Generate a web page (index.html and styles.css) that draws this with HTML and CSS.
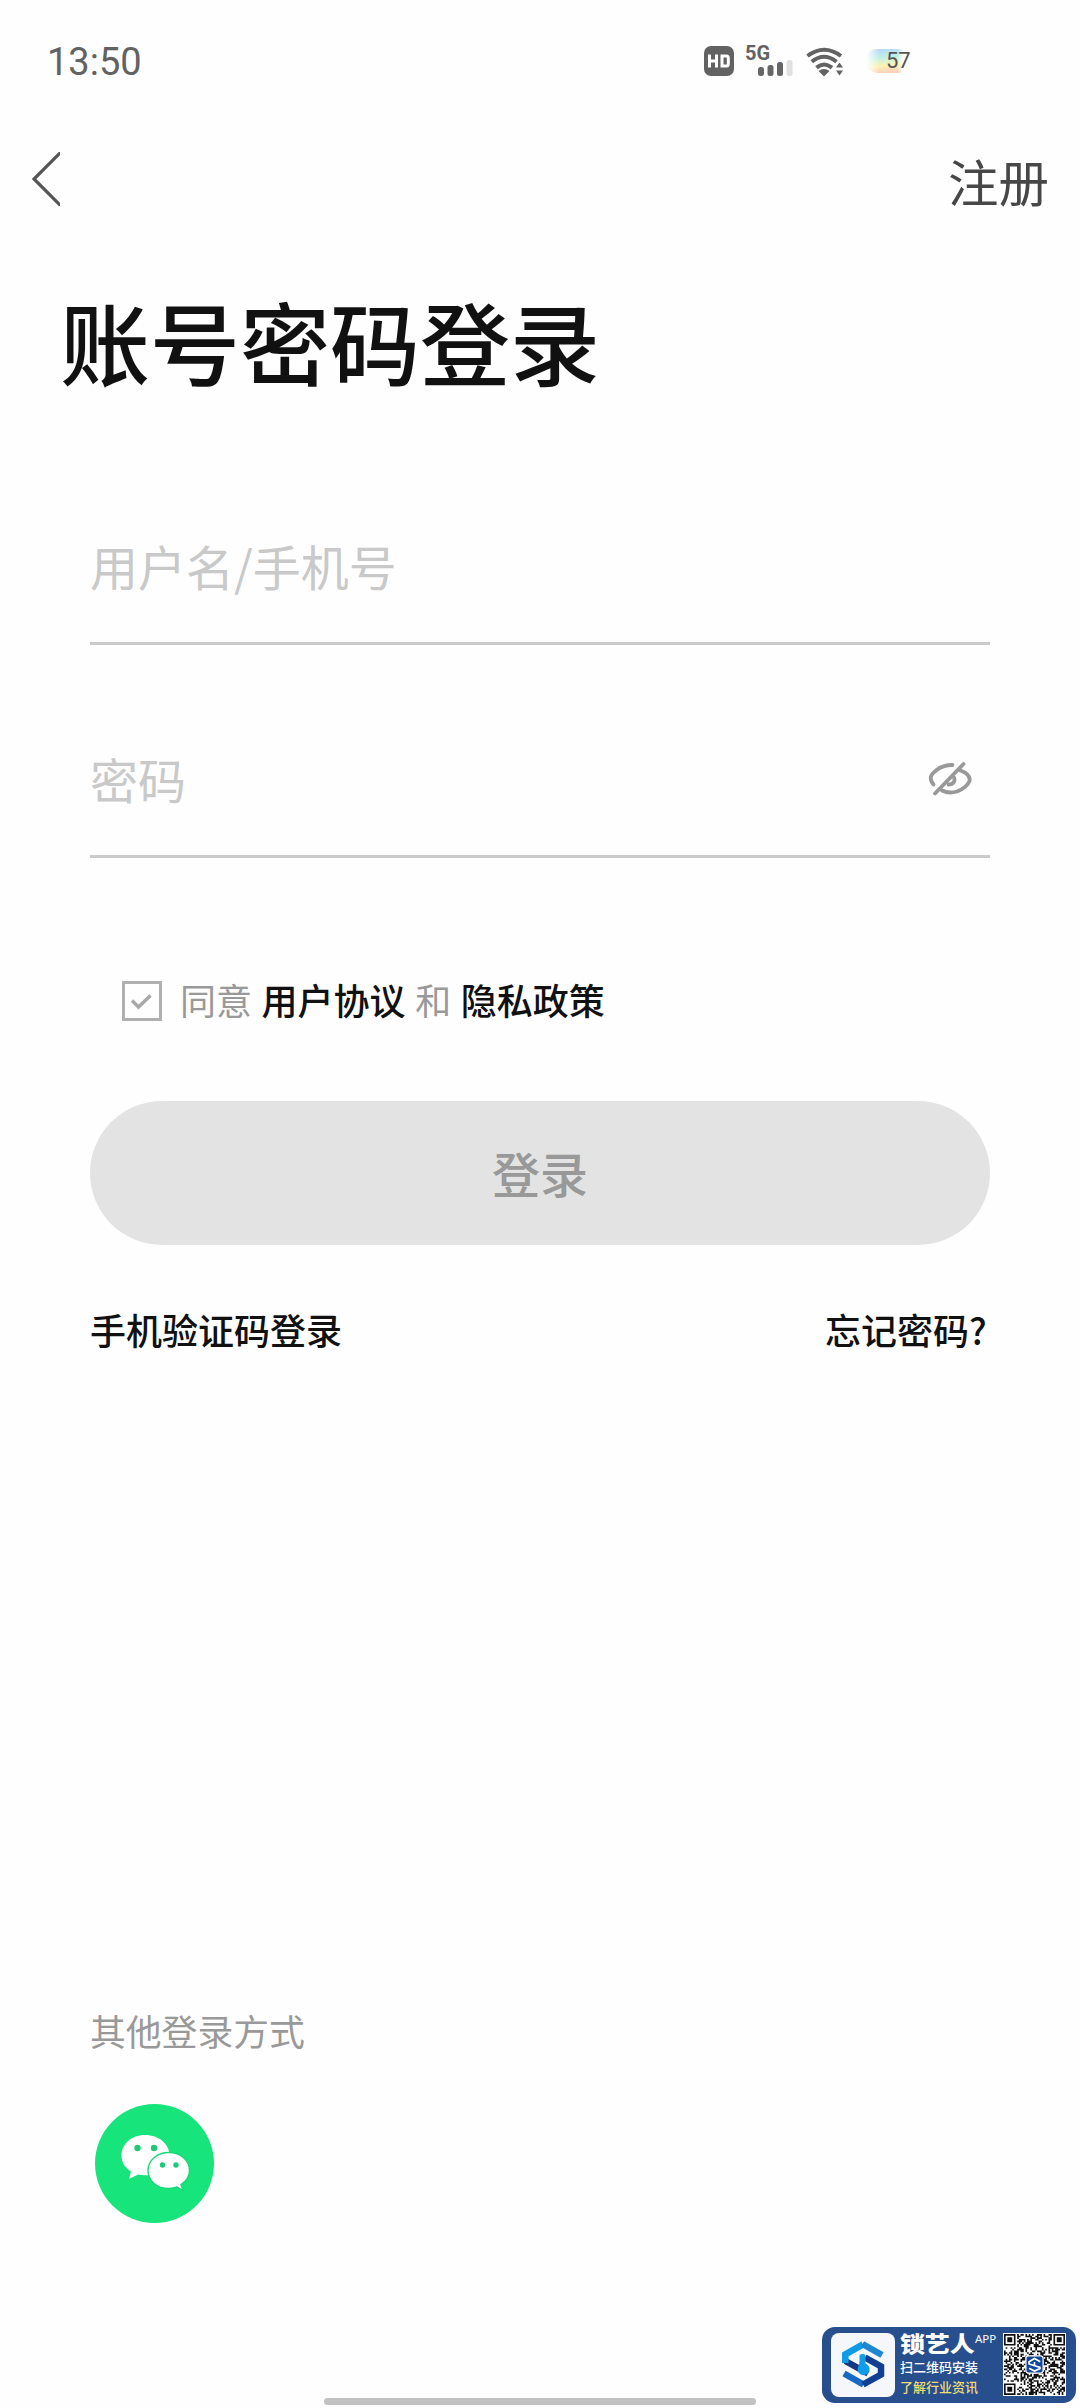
FILE: index.html
```html
<!DOCTYPE html>
<html lang="zh-CN">
<head>
<meta charset="utf-8">
<title>账号密码登录</title>
<link rel="stylesheet" href="styles.css">
</head>
<body>
<div class="screen">
  <div class="status">
    <span class="time">13:50</span>
    <div class="status-icons">
      <svg class="ic-hd" width="30" height="30" viewBox="0 0 30 30"><rect width="30" height="30" rx="7" fill="#626262"/><path d="M5.500 8.500V21.500M12.500 8.500V21.500M5.500 15H12.500M18 10H22.500Q24.300 10 24.300 12V18Q24.300 20 22.500 20H18Z" fill="none" stroke="#fff" stroke-width="3"/></svg>
      <div class="cell">
        <span class="net">5G</span>
        <svg width="35" height="16" viewBox="0 0 35 16"><g fill="#666"><rect x="0" y="7" width="6" height="9" rx="2.500"/><rect x="9.500" y="5" width="6" height="11" rx="2.500"/><rect x="19" y="2" width="6" height="14" rx="2.500"/></g><rect x="28.500" y="0" width="6" height="16" rx="2.500" fill="#e0e0e0"/></svg>
      </div>
      <svg class="ic-wifi" width="38" height="30" viewBox="0 0 38 30"><g fill="none" stroke="#626262" stroke-width="4"><path d="M1.500 9Q18 -3.500 35 9"/><path d="M5.800 14.800Q18 4.800 30.500 14.800"/><path d="M10.500 20.600Q18 14.500 26 20.600"/></g><path d="M12.500 24Q18 20 23.500 24L18 29.500Z" fill="#626262"/><path d="M30 20.500L33.500 15.500L37 20.500ZM30 23.500L33.500 28.500L37 23.500Z" fill="#626262"/></svg>
      <div class="battery"><span>57</span></div>
    </div>
  </div>

  <header class="nav">
    <svg class="back" width="28" height="54" viewBox="0 0 28 54"><path d="M30 -1L2 27L30 55" fill="none" stroke="#555" stroke-width="3.200"/></svg>
    <a class="register">注册</a>
  </header>

  <h1 class="title">账号密码登录</h1>

  <main class="form">
    <div class="field"><span>用户名/手机号</span></div>
    <div class="field">
      <span>密码</span>
      <svg class="eye" width="44" height="36" viewBox="0 0 44 36"><g fill="none" stroke="#999" stroke-width="3.800" stroke-linecap="round" stroke-linejoin="round"><path d="M5.500 23.500C1 18 2 14 8 9.500C13 5.500 18 4 24.500 4"/><path d="M32.500 9.500C39 11.500 42.500 16 41.500 20C39 26 33 29 29 30.500C24 32 18 31.500 14 29.500"/><path d="M35.500 3L7 32.500"/><path d="M26 16.500C27.500 20 25.500 23.500 20.500 23.500"/></g></svg>
    </div>

    <div class="agree">
      <svg width="40" height="40" viewBox="0 0 40 40"><rect x="1.500" y="1.500" width="37" height="37" fill="none" stroke="#b0b0b0" stroke-width="3"/><path d="M10 19.500L16.500 26L28.500 14.500" fill="none" stroke="#a8a8a8" stroke-width="3.400"/></svg>
      <p>同意 <b>用户协议</b> 和 <b>隐私政策</b></p>
    </div>

    <div class="submit">登录</div>

    <div class="links"><a>手机验证码登录</a><a>忘记密码<span class="mark">?</span></a></div>
  </main>

  <section class="other">
    <p>其他登录方式</p>
    <svg width="119" height="119" viewBox="0 0 119 119">
      <circle cx="59.500" cy="59.500" r="59.500" fill="#18e47c"/>
      <path d="M50 31C36.500 31 26.500 40 26.500 51.500C26.500 58.500 30 63.500 36 67.500L34 75L43 70.500C57 74 74.500 66 74.500 51.500C74.500 40 64 31 50 31Z" fill="#fff"/>
      <path d="M74 48.500C62 48.500 53 56.500 53 66.500C53 77 62 84.500 74 84.500Q78.500 84.500 82 83L88 86.500L86 80.500C91.500 77 94.500 72.500 94.500 66.500C94.500 56.500 85.500 48.500 74 48.500Z" fill="#fff" stroke="#18d878" stroke-width="1.400"/>
      <g fill="#20c97a"><circle cx="42.500" cy="44" r="3.200"/><circle cx="59" cy="44" r="3.200"/><circle cx="67.500" cy="61" r="2.700"/><circle cx="81" cy="61" r="2.700"/></g>
    </svg>
  </section>

  <div class="home-bar"></div>

  <aside class="promo">
    <svg class="logo" width="64" height="64" viewBox="0 0 64 64">
      <rect width="64" height="64" rx="8" fill="#f5f7fa"/>
      <g fill="none" stroke-width="6.500">
        <path d="M14.300 28L37 40.500" stroke="#14387d"/>
        <path d="M14.300 30V21.300L32 11.300" stroke="#0f9be6"/>
        <path d="M31.500 11L51 22" stroke="#1f86cf"/>
        <path d="M13 40.500L32.500 51.500" stroke="#1769c4"/>
        <path d="M32 51.500L50 41.500V33.500L34 24.500" stroke="#123f92"/>
      </g>
      <path d="M28.500 22Q31.500 20 34.500 22V30.500A6 6 0 1 1 27.500 33Q28.500 31 28.500 28Z" fill="#129de8"/>
    </svg>
    <div class="promo-text">
      <div class="brand"><strong>锁艺人</strong><sup>APP</sup></div>
      <span>扫二维码安装</span>
      <em>了解行业资讯</em>
    </div>
    <svg class="qr" width="63" height="63" viewBox="-0.600 -0.600 38.200 38.200">
      <rect x="-0.600" y="-0.600" width="38.200" height="38.200" fill="#fff"/>
      <path id="modules" fill="#101010"/>
      <rect x="13.300" y="13.300" width="10.400" height="10.400" rx="1.500" fill="#12469c" stroke="#fff" stroke-width=".7"/>
      <path d="M22 16.800L18.500 14.900L15.200 16.800V18.200L21.800 20.300V21L18.500 22.500L15.200 20.800M18.500 17V19.300" fill="none" stroke="#fff" stroke-width="1"/>
    </svg>
  </aside>
</div>
<script src="qr.js"></script>
</body>
</html>
```
FILE: styles.css
```css
* { box-sizing: border-box; margin: 0; padding: 0; }
body { background: #fefefe; font-family: "Noto Sans CJK SC", sans-serif; }
svg { display: block; flex: none; }
.screen { position: relative; width: 1080px; height: 2408px; display: flex; flex-direction: column; overflow: hidden; }

.status { height: 120px; padding: 46px 170px 0 47px; display: flex; justify-content: space-between; align-items: flex-start; }
.time { padding-top: 1px; font: 400 38px/30px Roboto, sans-serif; color: #626262; }
.status-icons { display: flex; align-items: flex-start; }
.cell { width: 49px; height: 30px; margin-left: 11px; display: flex; flex-direction: column; }
.cell svg { margin-left: 13px; }
.net { font: 700 20px/14px Roboto, sans-serif; color: #626262; }
.ic-wifi { margin: 1px 0 0 12px; }
.battery { width: 44px; height: 24px; margin: 3px 0 0 22px; padding-left: 20px; border-radius: 10px 0 0 12px;
  background: linear-gradient(90deg, #fefefe 0%, transparent 30%, transparent 72%, #fefefe 84%), linear-gradient(175deg, #b9dcf6 10%, #bff0e6 35%, #fbf3b4 65%, #fcd0bd 92%); }
.battery span { font: 400 22px/22px Roboto, sans-serif; color: #555; }

.nav { height: 120px; padding: 0 31px 0 32px; display: flex; justify-content: space-between; align-items: center; }
.back { margin-bottom: 2px; }
.register { font-size: 50.5px; line-height: 118px; color: #474747; }
.title { height: 192px; padding: 40px 0 0 60px; font-size: 90px; line-height: 120px; font-weight: 500; color: #111; }

.form { padding: 0 90px; }
.field { height: 213px; padding: 97px 18px 40px 0; border-bottom: 3px solid #cbcbcb; display: flex; justify-content: space-between; align-items: center; font-size: 48px; line-height: 73px; color: #c9c9c9; }
.agree { height: 243px; padding: 123px 0 0 32px; display: flex; gap: 18px; align-items: flex-start; }
.agree p { font-size: 36px; line-height: 36px; color: #999; word-spacing: 1.5px; }
.agree b { font-weight: 500; color: #111; }
.submit { height: 144px; border-radius: 72px; background: #e3e3e3; color: #999; font-size: 48px; font-weight: 500; line-height: 142px; text-align: center; }
.links { padding-top: 60px; display: flex; justify-content: space-between; font-size: 36px; line-height: 48px; font-weight: 500; color: #111; }
.mark { display: inline-block; width: 20px; margin-right: 1px; }

.other { margin-top: auto; height: 392px; padding: 0 90px; }
.other p { font-size: 35.8px; line-height: 48px; color: #999; }
.other svg { margin: 50px 0 0 5px; }
.home-bar { width: 432px; height: 7px; flex: none; align-self: center; margin-bottom: 3px; border-radius: 4px; background: #c1c1c1; }

.promo { position: absolute; left: 822px; top: 2327px; width: 254px; height: 76px; padding: 6px 9px; border-radius: 13px; background: #274f8e; display: flex; }
.promo-text { width: 108px; padding-left: 5px; display: flex; flex-direction: column; color: #fff; white-space: nowrap; }
.brand { height: 24px; display: flex; }
.brand strong { width: 75px; font-size: 22px; line-height: 19px; font-weight: 900; transform: scaleX(1.13); transform-origin: left; }
.brand sup { font: 400 11.5px/12px "Noto Sans", sans-serif; }
.promo-text span, .promo-text em { font-size: 13px; line-height: 20px; font-weight: 500; font-style: normal; }
.promo-text span { margin-top: 1px; }
.promo-text em { color: #f0dc72; }
```
FILE: qr.js
```js
// Fills the 37-module code: three finder squares and the data area.
const N = 37;
let seed = 20240611, d = "";
const rand = () => (seed = (seed * 1103515245 + 12345) % 2147483648) / 2147483648;
const finder = (x, y) => {
  for (const [cx, cy] of [[0, 0], [N - 7, 0], [0, N - 7]]) {
    const u = x - cx, v = y - cy;
    if (u >= -1 && u <= 7 && v >= -1 && v <= 7) {
      const r = Math.max(Math.abs(u - 3), Math.abs(v - 3));
      return r === 3 || r < 2;
    }
  }
  return null;
};
for (let y = 0; y < N; y++)
  for (let x = 0; x < N; x++) {
    const f = finder(x, y);
    if (f === null ? rand() < 0.5 : f) d += `M${x} ${y}h1v1h-1z`;
  }
document.getElementById("modules").setAttribute("d", d);
```
